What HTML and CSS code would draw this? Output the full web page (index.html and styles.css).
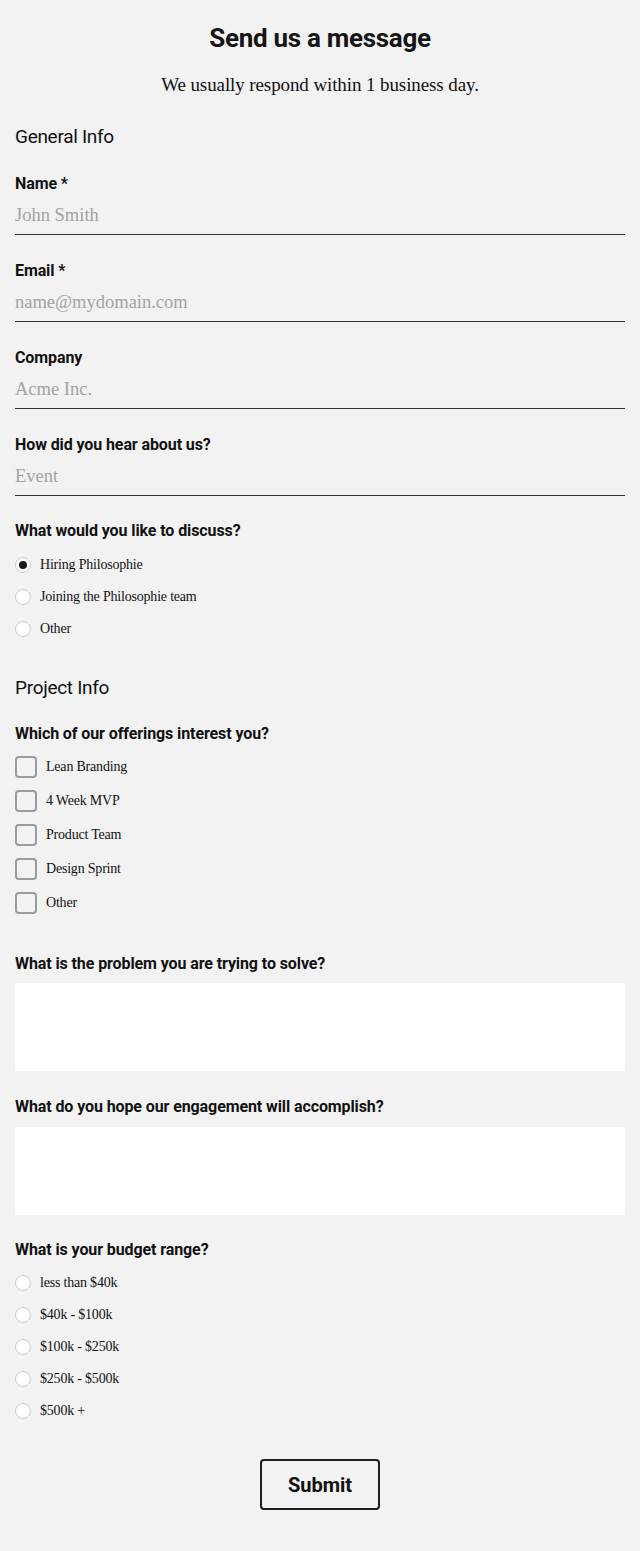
FILE: index.html
```html
<!DOCTYPE html>
<html>
<head>
<meta charset="utf-8">
<link rel="stylesheet" href="styles.css">
</head>
<body>
<form class="form">
  <h1 class="title">Send us a message</h1>
  <p class="subtitle">We usually respond within 1 business day.</p>

  <h2 class="section">General Info</h2>

  <div class="field">
    <label class="label">Name *</label>
    <div class="input">John Smith</div>
  </div>
  <div class="field">
    <label class="label">Email *</label>
    <div class="input">name@mydomain.com</div>
  </div>
  <div class="field">
    <label class="label">Company</label>
    <div class="input">Acme Inc.</div>
  </div>
  <div class="field">
    <label class="label">How did you hear about us?</label>
    <div class="input">Event</div>
  </div>

  <div class="group">
    <div class="label">What would you like to discuss?</div>
    <div class="options radios">
      <div class="option"><span class="radio checked"></span><span class="opt-text">Hiring Philosophie</span></div>
      <div class="option"><span class="radio"></span><span class="opt-text">Joining the Philosophie team</span></div>
      <div class="option"><span class="radio"></span><span class="opt-text">Other</span></div>
    </div>
  </div>

  <h2 class="section section-2">Project Info</h2>

  <div class="group group-offer">
    <div class="label">Which of our offerings interest you?</div>
    <div class="options checks">
      <div class="option"><span class="check"></span><span class="opt-text">Lean Branding</span></div>
      <div class="option"><span class="check"></span><span class="opt-text">4 Week MVP</span></div>
      <div class="option"><span class="check"></span><span class="opt-text">Product Team</span></div>
      <div class="option"><span class="check"></span><span class="opt-text">Design Sprint</span></div>
      <div class="option"><span class="check"></span><span class="opt-text">Other</span></div>
    </div>
  </div>

  <div class="group group-text">
    <div class="label">What is the problem you are trying to solve?</div>
    <div class="textarea"></div>
  </div>
  <div class="group group-text2">
    <div class="label">What do you hope our engagement will accomplish?</div>
    <div class="textarea"></div>
  </div>

  <div class="group group-budget">
    <div class="label">What is your budget range?</div>
    <div class="options radios">
      <div class="option"><span class="radio"></span><span class="opt-text">less than $40k</span></div>
      <div class="option"><span class="radio"></span><span class="opt-text">$40k - $100k</span></div>
      <div class="option"><span class="radio"></span><span class="opt-text">$100k - $250k</span></div>
      <div class="option"><span class="radio"></span><span class="opt-text">$250k - $500k</span></div>
      <div class="option"><span class="radio"></span><span class="opt-text">$500k +</span></div>
    </div>
  </div>

  <div class="actions">
    <button type="button" class="submit">Submit</button>
  </div>
</form>
</body>
</html>
```

FILE: styles.css
```css
html, body {
  margin: 0;
  padding: 0;
  background: #f2f2f2;
}
body {
  color: #111;
  font-family: "Liberation Serif", "Times New Roman", serif;
}
.form {
  padding: 22px 15px 40px;
  display: flex;
  flex-direction: column;
}
.title {
  margin: 0;
  text-align: center;
  font-family: "Roboto", "Liberation Sans", sans-serif;
  font-weight: 700;
  font-size: 26px;
  line-height: 32px;
  letter-spacing: -0.3px;
  color: #151515;
}
.subtitle {
  margin: 18px 0 0;
  text-align: center;
  font-size: 19px;
  line-height: 26px;
  letter-spacing: -0.1px;
  color: #111;
}
.section {
  margin: 27px 0 0;
  font-family: "Roboto", "Liberation Sans", sans-serif;
  font-weight: 400;
  font-size: 19px;
  line-height: 24px;
  letter-spacing: -0.3px;
  color: #111;
}
.section-2 {
  margin-top: 38px;
}
.label {
  display: block;
  font-family: "Roboto", "Liberation Sans", sans-serif;
  font-weight: 700;
  font-size: 16px;
  line-height: 20px;
  letter-spacing: -0.1px;
  color: #111;
}
.field {
  margin-top: 25px;
}
.field + .field {
  margin-top: 26px;
}
.input {
  margin-top: 8px;
  height: 32px;
  line-height: 26px;
  font-size: 18.5px;
  color: #a3a3a3;
  border-bottom: 1px solid #333;
}
.group {
  margin-top: 25px;
}
.group-offer {
  margin-top: 24px;
}
.options {
  display: flex;
  flex-direction: column;
}
.radios {
  margin-top: 15px;
  gap: 14px;
}
.group-budget .radios {
  margin-top: 14px;
}
.radios .option {
  height: 18px;
}
.option {
  display: flex;
  align-items: center;
  font-size: 14px;
  line-height: 18px;
  letter-spacing: -0.2px;
}
.radio {
  width: 14px;
  height: 14px;
  border-radius: 50%;
  background: #fff;
  border: 1px solid #cbcbcb;
  margin-right: 9px;
  position: relative;
  flex: none;
}
.radio.checked::after {
  content: "";
  position: absolute;
  left: 3px;
  top: 3px;
  width: 8px;
  height: 8px;
  border-radius: 50%;
  background: #1a1a1a;
}
.checks {
  margin-top: 12px;
  gap: 12px;
}
.checks .option {
  height: 22px;
}
.check {
  width: 18px;
  height: 18px;
  border: 2px solid #979ca2;
  border-radius: 4px;
  margin-right: 9px;
  flex: none;
}
.group-text {
  margin-top: 40px;
}
.group-text2 {
  margin-top: 26px;
}
.textarea {
  margin-top: 9px;
  height: 88px;
  background: #fff;
}
.group-text2 .textarea {
  margin-top: 10px;
}
.group-budget {
  margin-top: 25px;
}
.actions {
  margin-top: 39px;
  display: flex;
  justify-content: center;
}
.submit {
  width: 120px;
  height: 51px;
  background: transparent;
  border: 2px solid #1e1e1e;
  border-radius: 4px;
  font-family: "Roboto", "Liberation Sans", sans-serif;
  font-weight: 700;
  font-size: 20px;
  color: #111;
  cursor: pointer;
}
```
